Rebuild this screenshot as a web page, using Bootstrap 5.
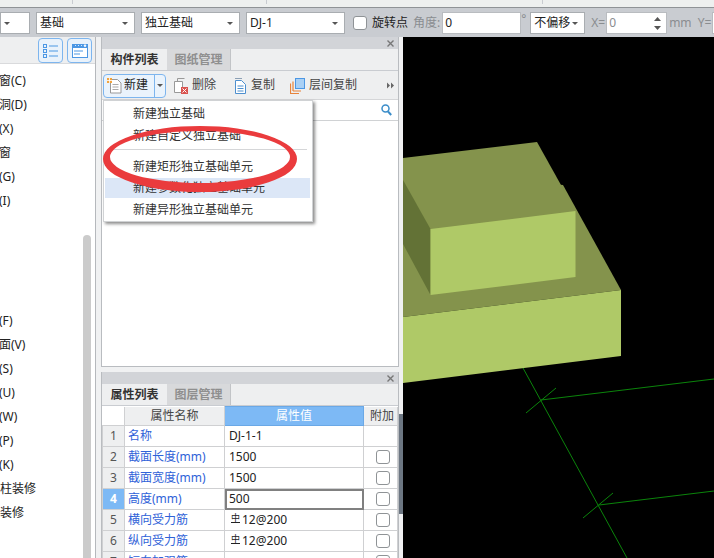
<!DOCTYPE html>
<html>
<head>
  <title>GTJ</title>
  <link href="https://cdn.jsdelivr.net/npm/bootstrap@5.3.0/dist/css/bootstrap.min.css" rel="stylesheet">
  <style>
    html, body { height: 558px; overflow: hidden; }
    body { font: 12px/1.2 "Noto Sans", "Noto Sans CJK SC", sans-serif; color: #222; background: #c9ccd1; }
    .app-shell { width: 714px; height: 558px; position: relative; overflow: hidden; }

    /* top strip and property toolbar */
    .top-strip { height: 8px; background: #eef0ef; border-bottom: 1px solid #8f9396; }
    .tick-at { width: 1px; height: 4px; background: #c9ccd1; }
    .tick-one { margin-left: 72px; }
    .tick-two { margin-left: 193px; }
    .tick-three { margin-left: 275px; }
    .tool-row { height: 29px; padding-top: 4px; background: #c9ccd1; white-space: nowrap; overflow: hidden; }
    .combo-box { height: 22px; background: #fff; border: 1px solid #a9adb1; padding: 0 3px; display: flex; align-items: center; justify-content: space-between; flex: none; font-size: 12px; color: #222; }
    .combo-box::after { content: ""; border: 3px solid transparent; border-top: 3px solid #555; border-bottom: 0; margin-right: 3px; }
    .combo-first { width: 30px; margin-right: 6px; }
    .combo-wide { width: 99px; margin-right: 6px; }
    .combo-off { width: 55px; margin-right: 6px; }
    .tool-check { width: 14px; height: 14px; background: #fff; border: 1px solid #8f9396; border-radius: 3px; flex: none; margin: 4px 5px 0 2px; }
    .dim-text { color: #8a8d90; flex: none; }
    .angle-label { margin-left: 5px; }
    .deg-mark { width: 9px; line-height: 14px; }
    .num-input { height: 22px; background: #fff; border: 1px solid #b9bcc0; padding: 0 2px; flex: none; display: flex; align-items: center; }
    .num-angle { width: 79px; margin-left: 2px; }
    .num-x { width: 61px; margin: 0 2px 0 1px; color: #8a8d90; position: relative; }
    .num-y { flex-grow: 1; margin-left: 1px; }
    .spin-marks { position: absolute; right: 5px; top: 4px; }

    .work-row { height: 521px; background: #f0f1f2; }

    /* left list */
    .left-pane { width: 96px; background: #fff; flex: none; position: relative; border-right: 1px solid #b5b8bc; }
    .left-head { height: 27px; background: #eeeff0; padding: 1px 3px 0 0; border-bottom: 1px solid #d9dadc; gap: 4px; }
    .head-btn { width: 25px; height: 25px; border: 1px solid #7db5ee; border-radius: 4px; background: #e9f2fb; display: flex; align-items: center; justify-content: center; }
    .left-list { margin: 0; padding: 5px 0 0; list-style: none; }
    .left-list li { height: 24px; line-height: 24px; white-space: nowrap; }
    .left-list .blank-row { height: 24px; }
    .clip-one { margin-left: -1px; }
    .left-scroll { position: absolute; left: 83px; top: 198px; width: 8px; bottom: 0; background: #cbcbcb; border-radius: 4px 4px 0 0; }

    /* middle panels */
    .mid-col { width: 298px; flex: none; margin-left: 5px; }
    .dock-panel { border: 1px solid #b9bcc0; border-top: 0; background: #fff; }
    .panel-upper { height: 330px; position: relative; }
    .panel-lower { height: 190px; margin-top: 5px; overflow: hidden; }
    .panel-title { height: 12px; background: #d2d4d8; display: flex; justify-content: flex-end; align-items: center; padding-right: 4px; }
    .tab-row { height: 22px; background: #eeeff0; border-bottom: 1px solid #c9ccd1; }
    .tab-on { width: 65px; text-align: center; line-height: 22px; font-weight: 700; background: #eeeff0; color: #333; }
    .tab-off { width: 64px; text-align: center; line-height: 21px; font-weight: 700; background: #d8d9db; color: #8f8f8f; border-right: 1px solid #c2c4c7; }
    .icon-row { height: 29px; background: #eeeff0; padding-top: 1px; border-bottom: 1px solid #d5d6d8; white-space: nowrap; }
    .new-btn { margin-left: 1px; width: 63px; height: 24px; border: 1px solid #7db5ee; border-radius: 4px; background: #eaf3fc; flex: none; }
    .new-main { width: 51px; gap: 2px; padding-left: 3px; border-right: 1px solid #7db5ee; }
    .new-caret { flex: 1; display: flex; justify-content: center; align-items: center; }
    .new-caret::after { content: ""; border: 3px solid transparent; border-top: 3px solid #555; border-bottom: 0; }
    .icon-act { gap: 4px; flex: none; color: #444; }
    .act-del { margin-left: 8px; gap: 3px; }
    .act-copy { margin-left: 18px; }
    .act-floor { margin-left: 15px; }
    .search-row { height: 21px; border-bottom: 1px solid #d0d2d4; padding-right: 6px; }

    .drop-menu { position: absolute; left: 1px; top: 63px; width: 210px; height: 122px; background: #fff; border: 1px solid #d0d2d4; box-shadow: 2px 2px 3px rgba(0,0,0,.45); padding-top: 2px; z-index: 3; }
    .drop-line { height: 22px; line-height: 22px; padding-left: 29px; color: #333; }
    .drop-split { height: 1px; background: #d5d6d8; margin: 2px 5px 6px 5px; }
    .drop-hover { background: #dce7f7; height: 20px; line-height: 20px; margin: 0 2px 1px 1px; padding-left: 28px; }
    .red-ring { position: absolute; left: 101px; top: 124px; z-index: 4; pointer-events: none; }

    /* property table */
    .prop-table { width: 296px; border-collapse: collapse; table-layout: fixed; background: #fff; }
    .col-num { width: 22px; }
    .col-name { width: 100px; }
    .col-val { width: 139px; }
    .prop-table td, .prop-table th { height: 21px; padding: 1px 4px 0; border: 1px solid #cfd0d2; font-weight: 400; white-space: nowrap; overflow: hidden; }
    .prop-table thead th { height: 19px; background: #eeeff0; text-align: center; color: #444; border-top: 0; }
    .prop-table thead .corner-cell { background: #fff; border: 0; }
    .prop-table thead .val-head { background: #7db9f5; color: #fff; border: 1px solid #6aa8e6; }
    .prop-table thead .add-head { padding: 1px 0 0 3px; }
    .prop-table td.row-num { background: #eeeff0; text-align: center; color: #555; padding: 1px 0 0; }
    .prop-table td.row-cur { background: #7db9f5; color: #fff; font-weight: 700; }
    .prop-table td.prop-name { color: #2f62d8; padding-left: 3px; }
    .prop-table td.check-cell { padding: 0 3px 0 8px; }
    .cell-edit { outline: 2px solid #808080; outline-offset: -2px; }
    .grid-check { display: block; width: 14px; height: 14px; margin: 0 auto; border: 1px solid #8f9396; border-radius: 3px; background: #fff; }
    .rebar-mark { display: inline-block; font-size: 9px; line-height: 8px; width: 9px; text-align: center; border-bottom: 1px solid #222; vertical-align: 3px; margin: 0 2px 0 2px; }
    .side-grip { position: absolute; left: 399px; top: 414px; width: 4px; height: 100px; background: #6c7682; z-index: 2; }

    .scene-pane { width: 311px; margin-left: 4px; flex: none; background: #000; }
    .scene-pane svg { display: block; }
  </style>
</head>
<body>
  <div class="app-shell">
    <div class="top-strip d-flex">
      <div class="tick-at tick-one"></div>
      <div class="tick-at tick-two"></div>
      <div class="tick-at tick-three"></div>
    </div>

    <div class="tool-row d-flex align-items-start">
      <div class="combo-box combo-first"></div>
      <div class="combo-box combo-wide">基础</div>
      <div class="combo-box combo-wide">独立基础</div>
      <div class="combo-box combo-wide">DJ-1</div>
      <div class="tool-check"></div>
      <span class="mt-1">旋转点</span>
      <span class="dim-text mt-1 angle-label">角度:</span>
      <div class="num-input num-angle">0</div>
      <span class="dim-text deg-mark">°</span>
      <div class="combo-box combo-off">不偏移</div>
      <span class="dim-text mt-1">X=</span>
      <div class="num-input num-x">0
        <svg class="spin-marks" width="7" height="13" viewBox="0 0 7 13"><path d="M3.5 0 7 4H0zM0 9h7l-3.500 4z" fill="#555"/></svg>
      </div>
      <span class="dim-text mt-1">mm&nbsp;&nbsp;Y=</span>
      <div class="num-input num-y"></div>
    </div>

    <div class="work-row d-flex">
      <div class="left-pane">
        <div class="left-head d-flex justify-content-end">
          <div class="head-btn">
            <svg width="15" height="14" viewBox="0 0 15 14"><g fill="none" stroke="#4c97e4"><rect x=".5" y=".5" width="3" height="3"/><rect x=".5" y="5.500" width="3" height="3"/><rect x=".5" y="10.500" width="3" height="3"/></g><path d="M6 2h9M6 7h9M6 12h9" stroke="#4c97e4" stroke-width="1.200"/></svg>
          </div>
          <div class="head-btn">
            <svg width="16" height="14" viewBox="0 0 16 14"><rect x=".5" y=".5" width="15" height="13" fill="#fff" stroke="#4c97e4"/><rect x="0" y="0" width="16" height="4" fill="#4c97e4"/><path d="M3 1.500h1M6 1.500h1M9 1.500h1M12 1h2l-1 2z" stroke="#fff" fill="#fff" stroke-width=".8"/><path d="M2 7h9M2 10h6" stroke="#4c97e4" stroke-width="1.200"/></svg>
          </div>
        </div>
        <ul class="left-list">
          <li class="clip-one">窗(C)</li>
          <li class="clip-one">洞(D)</li>
          <li class="clip-one">(X)</li>
          <li class="clip-one">窗</li>
          <li class="clip-one">(G)</li>
          <li class="clip-one">(I)</li>
          <li class="blank-row"></li>
          <li class="blank-row"></li>
          <li class="blank-row"></li>
          <li class="blank-row"></li>
          <li class="clip-one">(F)</li>
          <li class="clip-one">面(V)</li>
          <li class="clip-one">(S)</li>
          <li class="clip-one">(U)</li>
          <li class="clip-one">(W)</li>
          <li class="clip-one">(P)</li>
          <li class="clip-one">(K)</li>
          <li>柱装修</li>
          <li>装修</li>
        </ul>
        <div class="left-scroll"></div>
      </div>

      <div class="mid-col">
        <div class="dock-panel panel-upper">
          <div class="panel-title">
            <svg width="7" height="7" viewBox="0 0 7 7"><path d="M.5.500l6 6M6.500.500l-6 6" stroke="#777" stroke-width="1.400"/></svg>
          </div>
          <div class="tab-row d-flex">
            <div class="tab-on">构件列表</div>
            <div class="tab-off">图纸管理</div>
          </div>
          <div class="icon-row d-flex align-items-center">
            <div class="new-btn d-flex">
              <div class="new-main d-flex align-items-center">
                <svg width="15" height="16" viewBox="0 0 15 16"><path d="M3.500 1.500h7l3.500 3.500v10h-10.500z" fill="#fff" stroke="#999"/><path d="M5.500 6.500h6M5.500 9h6M5.500 11.500h6" stroke="#aaa"/><path d="M0 0h5v5H0z" fill="#f1a33c"/><path d="M2.500 0v5M0 2.500h5" stroke="#fff" stroke-width=".8"/></svg>
                <span>新建</span>
              </div>
              <div class="new-caret"></div>
            </div>
            <div class="icon-act act-del d-flex align-items-center">
              <svg width="15" height="16" viewBox="0 0 15 16"><path d="M3.500 3V.500h7" fill="none" stroke="#999"/><path d="M.5 3.500h8v11h-8z" fill="#fff" stroke="#999"/><rect x="7" y="9" width="7" height="7" fill="#d9534f"/><path d="M8.500 10.500l4 4M12.500 10.500l-4 4" stroke="#fff"/></svg>
              <span>删除</span>
            </div>
            <div class="icon-act act-copy d-flex align-items-center">
              <svg width="13" height="16" viewBox="0 0 13 16"><path d="M1 .500h7" stroke="#8ca0b5" fill="none"/><path d="M1.500 2.500h6l4 4v9h-10z" fill="#fff" stroke="#4d8fcf"/><path d="M3.500 8h6M3.500 10.500h6M3.500 13h6" stroke="#4d8fcf"/></svg>
              <span>复制</span>
            </div>
            <div class="icon-act act-floor d-flex align-items-center">
              <svg width="15" height="16" viewBox="0 0 15 16"><path d="M.5 16V5.500M.5 15.500H9M3 13V3.500M3 13h8" stroke="#e8833a" fill="none" stroke-width="1.200"/><rect x="5.500" y=".5" width="9" height="10" fill="#a9d0f5" stroke="#4c97e4"/></svg>
              <span>层间复制</span>
            </div>
            <svg class="ms-auto me-1" width="7" height="7" viewBox="0 0 7 7"><path d="M0 .500l3 3-3 3zM4 .500l3 3-3 3z" fill="#666"/></svg>
          </div>
          <div class="search-row d-flex align-items-center justify-content-end">
            <svg width="11" height="12" viewBox="0 0 11 12"><circle cx="4.500" cy="4.500" r="3.500" fill="none" stroke="#3b8dc9" stroke-width="1.500"/><path d="M7 7.500l3.200 3.500" stroke="#3b8dc9" stroke-width="2"/></svg>
          </div>
          <div class="drop-menu">
            <div class="drop-line">新建独立基础</div>
            <div class="drop-line">新建自定义独立基础</div>
            <div class="drop-split"></div>
            <div class="drop-line">新建矩形独立基础单元</div>
            <div class="drop-line drop-hover">新建参数化独立基础单元</div>
            <div class="drop-line">新建异形独立基础单元</div>
          </div>
        </div>

        <div class="dock-panel panel-lower">
          <div class="panel-title">
            <svg width="7" height="7" viewBox="0 0 7 7"><path d="M.5.500l6 6M6.500.500l-6 6" stroke="#777" stroke-width="1.400"/></svg>
          </div>
          <div class="tab-row d-flex">
            <div class="tab-on">属性列表</div>
            <div class="tab-off">图层管理</div>
          </div>
          <table class="prop-table">
            <colgroup><col class="col-num"><col class="col-name"><col class="col-val"><col></colgroup>
            <thead>
              <tr><th class="corner-cell"></th><th>属性名称</th><th class="val-head">属性值</th><th class="add-head">附加</th></tr>
            </thead>
            <tbody id="propRows"></tbody>
          </table>
        </div>
      </div>

      <div class="scene-pane">
        <svg width="311" height="521" viewBox="403 37 311 521">
          <g stroke="#0b840b" stroke-width="1" fill="none">
            <path d="M523 368 627 558M541 400 714 379M526 413 556 388M599 505 714 491M583 518 613 493"/>
          </g>
          <path d="M403 170 563 185 621 290 403 317z" fill="#84934c"/>
          <path d="M403 317 621 290V356L403 383z" fill="#afc967"/>
          <path d="M403 158 537 142 575.500 211 430.500 229 403 180z" fill="#84934c"/>
          <path d="M403 180 430.500 229V295L403 244z" fill="#637236"/>
          <path d="M430.500 229 575.500 211V277L430.500 295z" fill="#afc967"/>
        </svg>
      </div>
    </div>

    <div class="side-grip"></div>
    <svg class="red-ring" width="200" height="72" viewBox="0 0 200 72">
      <path fill="#ea3b3d" fill-rule="evenodd" d="M2 35a97 33 0 1 0 194 0a97 33 0 1 0-194 0zM9 33a90 26 0 1 1 180 0a90 26 0 1 1-180 0z"/>
    </svg>
  </div>

  <script>
    // property rows for the lower table
    const propRows = [
      ['名称', 'DJ-1-1', false],
      ['截面长度(mm)', '1500', true],
      ['截面宽度(mm)', '1500', true],
      ['高度(mm)', '500', true],
      ['横向受力筋', '<span class="rebar-mark">中</span>12@200', true],
      ['纵向受力筋', '<span class="rebar-mark">中</span>12@200', true],
      ['短向加强筋', '', true]
    ];

    function renderPropRows() {
      const body = document.getElementById('propRows');
      propRows.forEach((row, i) => {
        const current = i === 3;
        const box = row[2] ? '<span class="grid-check"></span>' : '';
        const html = `
          <tr>
            <td class="row-num ${current ? 'row-cur' : ''}">${i + 1}</td>
            <td class="prop-name">${row[0]}</td>
            <td class="${current ? 'cell-edit' : ''}">${row[1]}</td>
            <td class="check-cell">${box}</td>
          </tr>`;
        body.insertAdjacentHTML('beforeend', html);
      });
    }

    renderPropRows();
  </script>
  <script src="https://cdn.jsdelivr.net/npm/bootstrap@5.3.0/dist/js/bootstrap.bundle.min.js"></script>
</body>
</html>
